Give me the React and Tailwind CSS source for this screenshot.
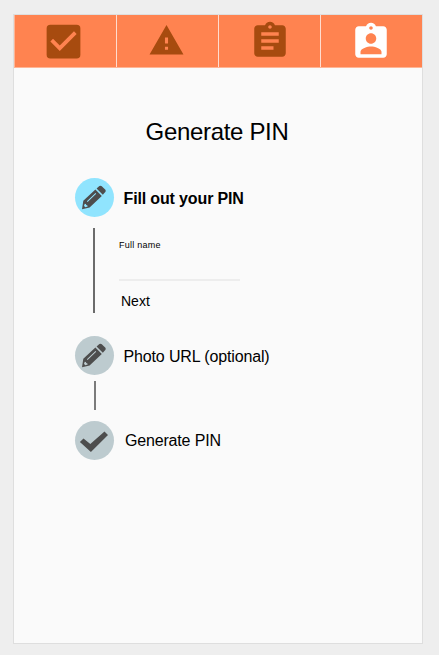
import React from 'react';
import { MdCheckBox, MdWarning, MdAssignment, MdAssignmentInd } from 'react-icons/md';

function Pencil() {
  return (
    <svg viewBox="0 0 39 39" className="h-[39px] w-[39px]">
      <path
        fill="#4d4d4d"
        fillRule="evenodd"
        d="M7 31.2 L8.3 22.8 L20.4 11.4 L26.8 18 L14.6 29.6 Z M9.8 25.8 L9 27.8 L10.2 29.2 L12.7 28.6 L12.4 27.4 L11.2 27.1 L10.9 26 Z M11.9 23.2 L12.6 23.9 L21.2 15.7 L20.5 15 Z"
      />
      <path fill="#4d4d4d" d="M21.6 10.6 L24.4 8 Q25.6 7.2 26.8 8.2 L30.4 11.8 Q31.2 12.9 30.3 14.1 L27.8 16.8 Z" />
    </svg>
  );
}

function Check() {
  return (
    <svg viewBox="0 0 39 39" className="h-[39px] w-[39px]" fill="#4d4d4d">
      <path d="M4.9 20.9 L8.5 17.4 L15.3 23 L29.5 10.4 L33 14 L15.9 31 Z" />
    </svg>
  );
}

function Tab({ children, active, width }) {
  return (
    <div className={`flex h-[52px] items-start justify-center bg-[#ff8350] ${width} ${active ? 'text-white' : 'text-[#a74b0f]'}`}>
      {children}
    </div>
  );
}

function Step({ color, icon, children, label }) {
  return (
    <div className="flex h-[39px] items-center">
      <div className={`h-[39px] w-[39px] shrink-0 rounded-full ${color}`}>{icon}</div>
      <div className={`whitespace-nowrap text-[16px] leading-5 ${label}`}>{children}</div>
    </div>
  );
}

export default function App() {
  return (
    <div className="h-[655px] w-[439px] bg-[#eeeeee] pl-[13px] pt-[14px] font-['Liberation_Sans',Arial,sans-serif] text-black">
      <main className="h-[630px] w-[410px] border border-[#dedede] bg-[#fafafa]">
        <nav className="flex h-[53px] gap-px border-b border-[#ffb595] bg-[#ffdccf]">
          <Tab width="w-[102px] border-l border-[#ffb595] pr-[4px]"><MdCheckBox className="mt-[4px] size-[45px]" /></Tab>
          <Tab width="w-[101px] pr-[2px]"><MdWarning className="mt-[7px] size-[37px]" /></Tab>
          <Tab width="w-[101px] pl-px"><MdAssignment className="mt-[5px] size-[42px]" /></Tab>
          <Tab width="w-[101px] pr-px" active><MdAssignmentInd className="mt-[6px] size-[42px]" /></Tab>
        </nav>
        <h1 className="mt-[49px] pr-[2px] text-center text-[24px] leading-[30px] tracking-[-0.32px]">Generate PIN</h1>
        <section className="mt-[31px] pl-[60.5px]">
          <Step color="bg-[#90e4fe]" icon={<Pencil />} label="ml-[10px] mt-[2px] font-bold tracking-[-0.14px]">Fill out your PIN</Step>
          <div className="mt-[11px] ml-[18.5px] flex h-[85px] border-l-2 border-[#6b6b6b]">
            <div className="ml-[24px] pt-[10px]">
              <label className="block text-[9px] leading-[14px] tracking-[0.25px]">Full name</label>
              <div className="mt-[27px] w-[121px] border-b-2 border-[#ededed]" />
              <div className="ml-[2px] mt-[11px] text-[14px] leading-[18px]">Next</div>
            </div>
          </div>
          <div className="mt-[23px]">
            <Step color="bg-[#bdcbcf]" icon={<Pencil />} label="ml-[10px] mt-[2px] tracking-[-0.14px]">Photo URL (optional)</Step>
          </div>
          <div className="ml-[19.5px] mt-[6px] h-[29px] w-[2px] bg-[#7b7b7b]" />
          <div className="mt-[11px]">
            <Step color="bg-[#bdcbcf]" icon={<Check />} label="ml-[11.5px] tracking-[-0.17px]">Generate PIN</Step>
          </div>
        </section>
      </main>
    </div>
  );
}
